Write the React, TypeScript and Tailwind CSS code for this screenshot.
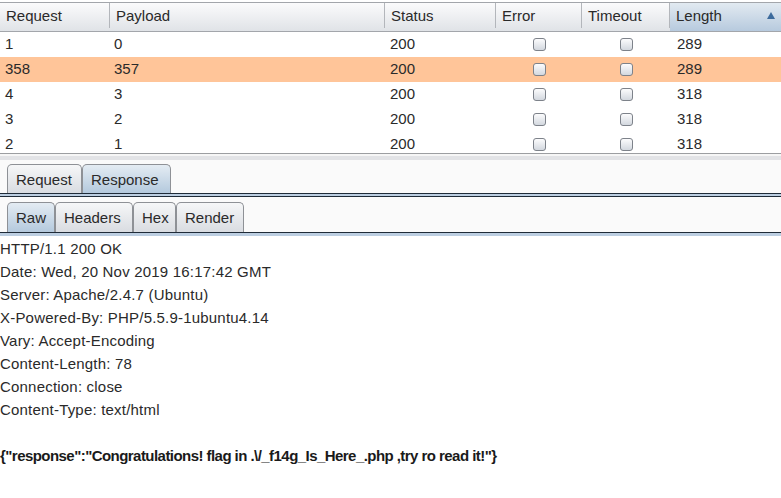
import React from 'react';

const rows = [
  { req: '1', payload: '0', status: '200', length: '289', hi: false },
  { req: '358', payload: '357', status: '200', length: '289', hi: true },
  { req: '4', payload: '3', status: '200', length: '318', hi: false },
  { req: '3', payload: '2', status: '200', length: '318', hi: false },
  { req: '2', payload: '1', status: '200', length: '318', hi: false },
];

const headers = [
  'HTTP/1.1 200 OK',
  'Date: Wed, 20 Nov 2019 16:17:42 GMT',
  'Server: Apache/2.4.7 (Ubuntu)',
  'X-Powered-By: PHP/5.5.9-1ubuntu4.14',
  'Vary: Accept-Encoding',
  'Content-Length: 78',
  'Connection: close',
  'Content-Type: text/html',
];

function Checkbox() {
  return (
    <span className="inline-block h-[13px] w-[13px] rounded-[3px] border border-[#7d828a] bg-gradient-to-b from-[#fcfcfd] to-[#d3d8df]" />
  );
}

function Tab({ label, selected, width }: { label: string; selected?: boolean; width: string }) {
  return (
    <div
      className={`flex h-full items-center rounded-t-[5px] border border-b-0 border-[#8e9196] pl-[8px] ${width} ${
        selected
          ? 'bg-gradient-to-b from-[#e4ecf3] to-[#b4c9dd]'
          : 'bg-gradient-to-b from-[#f6f7f8] to-[#d9dce1]'
      }`}
    >
      {label}
    </div>
  );
}

export default function App() {
  return (
    <div
      className="h-[498px] w-[781px] overflow-hidden bg-white text-[15px] leading-none text-[#2a2a2a]"
      style={{ fontFamily: '"Liberation Sans", Arial, sans-serif' }}
    >
      {/* results table */}
      <div className="pt-[2px]">
        <div className="flex h-[30px] border-y border-[#a3a6ab] bg-gradient-to-b from-[#fbfbfc] to-[#e0e3e7] pb-[3px]">
          <div className="flex w-[110px] items-center border-r border-[#b3b6bb] pl-[6px]">Request</div>
          <div className="flex w-[275px] items-center border-r border-[#b3b6bb] pl-[6px]">Payload</div>
          <div className="flex w-[111px] items-center border-r border-[#b3b6bb] pl-[6px]">Status</div>
          <div className="flex w-[86px] items-center border-r border-[#b3b6bb] pl-[6px]">Error</div>
          <div className="flex w-[88px] items-center border-r border-[#b3b6bb] pl-[6px]">Timeout</div>
          <div className="-mb-[3px] flex flex-1 items-center justify-between bg-gradient-to-b from-[#e2eaf1] to-[#b7cade] pb-[3px] pl-[6px] pr-[6px]">
            <span>Length</span>
            <svg width="8" height="7" viewBox="0 0 8 7">
              <path d="M4 0 L8 7 L0 7 Z" fill="#3d6b9c" />
            </svg>
          </div>
        </div>
        <div className="h-[121px] overflow-hidden">
          {rows.map((r) => (
            <div key={r.req} className={`flex h-[25px] items-center pb-[2px] ${r.hi ? 'bg-[#ffc599]' : 'bg-white'}`}>
              <div className="w-[110px] pl-[5px]">{r.req}</div>
              <div className="w-[275px] pl-[4px]">{r.payload}</div>
              <div className="w-[111px] pl-[5px]">{r.status}</div>
              <div className="flex w-[86px] justify-center pt-[2px]">
                <Checkbox />
              </div>
              <div className="flex w-[88px] justify-center pt-[2px]">
                <Checkbox />
              </div>
              <div className="flex-1 pl-[7px]">{r.length}</div>
            </div>
          ))}
        </div>
      </div>

      {/* split divider */}
      <div className="border-t border-[#9c9ea1]" />
      <div className="h-[2px] bg-[#f6f6f6]" />
      <div className="h-[4px] bg-[#e2e3e6]" />

      {/* request / response tabs */}
      <div className="bg-[#fafafa] pt-[4px]">
        <div className="flex h-[29px] pl-[7px]">
          <Tab label="Request" width="w-[75px]" />
          <Tab label="Response" width="w-[89px]" selected />
        </div>
        <div className="h-[1px] bg-[#1f2b38]" />
        <div className="h-[2px] bg-[#bccee1]" />
        <div className="h-[1px] bg-[#1f2b38]" />

        {/* raw / headers / hex / render tabs */}
        <div className="flex h-[35px] pl-[7px] pt-[5px]">
          <Tab label="Raw" width="w-[48px]" selected />
          <Tab label="Headers" width="w-[78px]" />
          <Tab label="Hex" width="w-[43px]" />
          <Tab label="Render" width="w-[68px]" />
        </div>
      </div>
      <div className="h-[1px] bg-[#1f2b38]" />
      <div className="h-[3px] bg-[#bccee1]" />

      {/* response body */}
      <div className="bg-white pt-[1px] leading-[23px] tracking-[0.2px]">
        {headers.map((h) => (
          <div key={h} className="h-[23px] whitespace-pre">
            {h}
          </div>
        ))}
        <div className="h-[23px]" />
        <div className="h-[23px] font-bold tracking-[-0.55px] text-[#1a1a1a]">
          {'{"response":"Congratulations! flag in .\\/_f14g_Is_Here_.php ,try ro read it!"}'}
        </div>
      </div>
    </div>
  );
}
